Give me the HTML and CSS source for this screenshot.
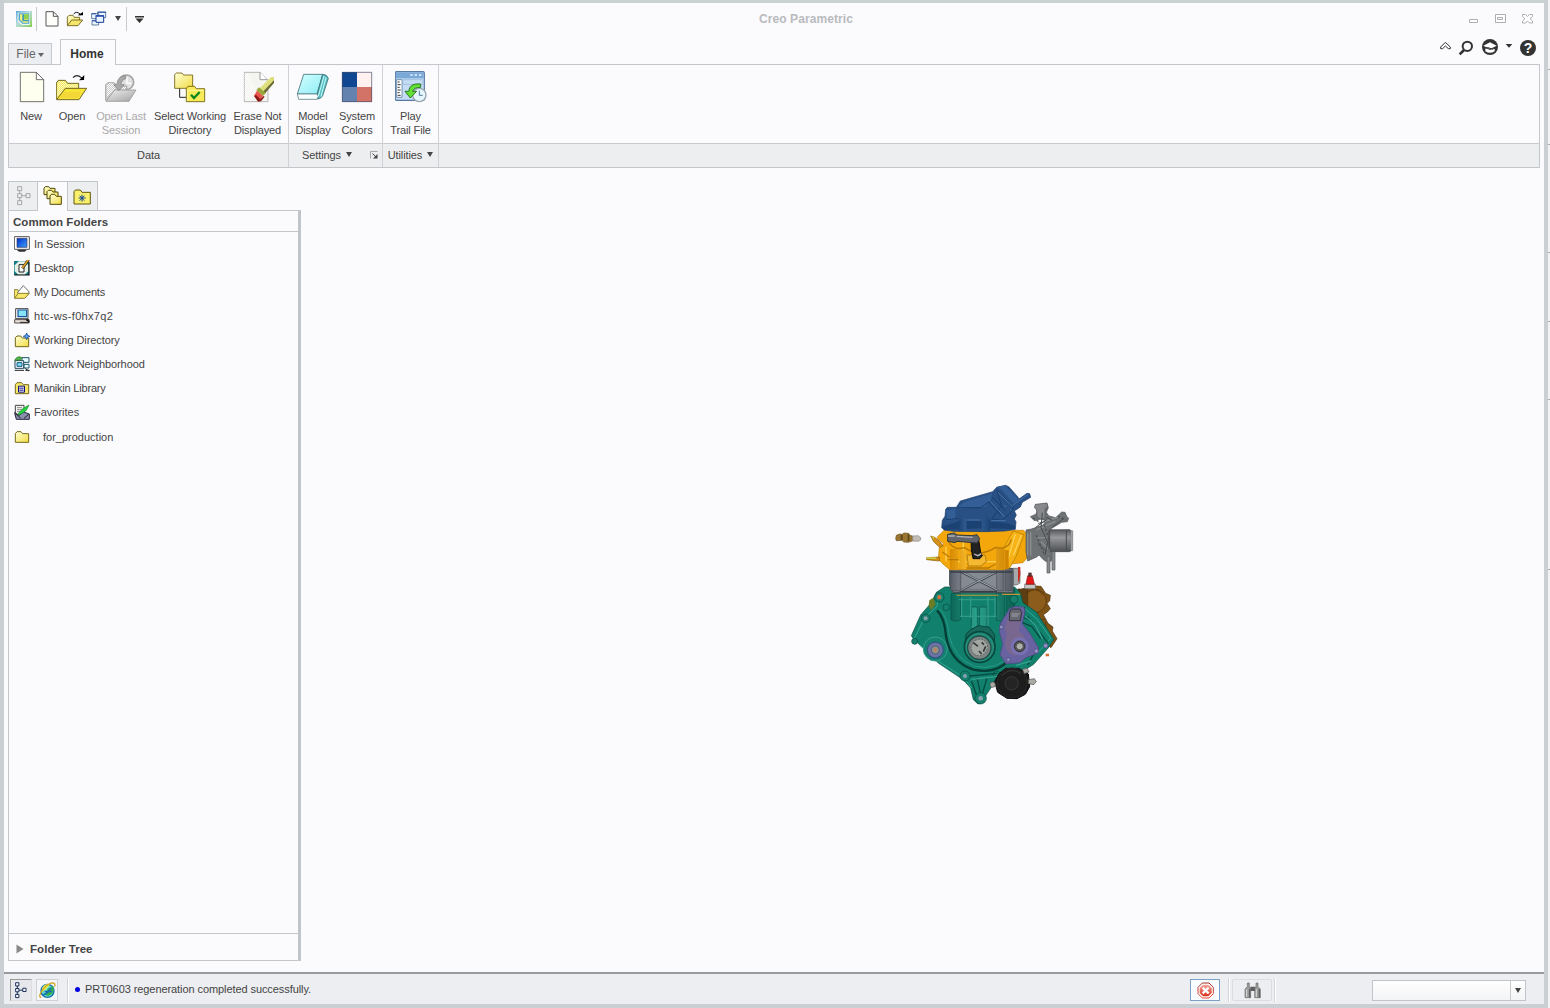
FILE: index.html
```html
<!DOCTYPE html>
<html lang="en">
<head>
<meta charset="utf-8">
<title>Creo Parametric</title>
<link rel="stylesheet" href="styles.css">
</head>
<body>
<svg class="defs" width="0" height="0" aria-hidden="true">
  <defs>
    <linearGradient id="gy" x1="0" y1="0" x2="1" y2="1"><stop offset="0" stop-color="#ffffd8"/><stop offset="1" stop-color="#f2dc42"/></linearGradient>
    <linearGradient id="gg" x1="0" y1="0" x2="1" y2="1"><stop offset="0" stop-color="#f0f0f0"/><stop offset="1" stop-color="#a2a2a2"/></linearGradient>
    <linearGradient id="gb" x1="0" y1="0" x2="1" y2="1"><stop offset="0" stop-color="#0030c8"/><stop offset="1" stop-color="#3c9cff"/></linearGradient>
    <linearGradient id="gc" x1="0" y1="0" x2="1" y2="1"><stop offset="0" stop-color="#d4ffff"/><stop offset="1" stop-color="#8cecf4"/></linearGradient>
    <linearGradient id="gl" x1="0" y1="0" x2="1" y2="1"><stop offset="0" stop-color="#5fa6dc"/><stop offset=".45" stop-color="#b7dcdb"/><stop offset="1" stop-color="#86cf4c"/></linearGradient>
    <linearGradient id="gr" x1="0" y1="0" x2="0" y2="1"><stop offset="0" stop-color="#9c3026"/><stop offset="1" stop-color="#ef4a32"/></linearGradient>
    <linearGradient id="gx" x1="0" y1="0" x2="0" y2="1"><stop offset="0" stop-color="#f2a79c"/><stop offset="1" stop-color="#d8301c"/></linearGradient>
    <linearGradient id="cyl" x1="0" y1="0" x2="0" y2="1"><stop offset="0" stop-color="#55575a"/><stop offset=".35" stop-color="#96989b"/><stop offset="1" stop-color="#4c4e50"/></linearGradient>
    <linearGradient id="post" x1="0" y1="0" x2="1" y2="0"><stop offset="0" stop-color="#5a6069"/><stop offset=".4" stop-color="#aab0b8"/><stop offset="1" stop-color="#565b64"/></linearGradient>
    <linearGradient id="gold" x1="0" y1="0" x2="1" y2="0"><stop offset="0" stop-color="#d88a00"/><stop offset=".4" stop-color="#ffc739"/><stop offset="1" stop-color="#cf8200"/></linearGradient>
    <linearGradient id="teal" x1="0" y1="0" x2="1" y2="0"><stop offset="0" stop-color="#0c6656"/><stop offset=".4" stop-color="#2aa18b"/><stop offset="1" stop-color="#0b5f50"/></linearGradient>
    <linearGradient id="navy" x1="0" y1="0" x2="1" y2="0"><stop offset="0" stop-color="#1c4375"/><stop offset=".4" stop-color="#4270a8"/><stop offset="1" stop-color="#1c4375"/></linearGradient>
    <pattern id="dots" width="6" height="6" patternUnits="userSpaceOnUse"><path fill="#fff" d="M0 0h3v3H0zM3 3h3v3H3z"/></pattern>
  </defs>
</svg>

<div class="desktop">
<div class="window">
  <header class="titlebar">
    <div class="quick">
      <svg class="logo" width="16" height="16" viewBox="48 33 48 48"><path fill="url(#gl)" d="M48 33h48v48H48z"/><path fill="#eef8f2" d="M53 38h37v37H65L53 63z"/><path fill="#4aa4cf" d="M56 40h32v31H67L56 60z"/><path fill="#f1ef7c" d="M60 43h25v25H69l-9-9z"/><path fill="#3e98ba" d="M67 43h5v17h14v4H67z"/><path fill="#8fd04c" d="M72 43h14v15H72z"/></svg>
      <i class="vsep"></i>
      <svg width="14" height="16" viewBox="133 33 42 48"><path fill="#fffffb" stroke="#555" stroke-width="3" d="M136 35h22l14 14v29h-36z"/><path fill="none" stroke="#555" stroke-width="3" d="M158 35v14h14"/></svg>
      <svg width="18" height="16" viewBox="198 33 54 48"><path fill="url(#gy)" stroke="#64580f" stroke-width="2.500" d="M202 75V51l5-5h12l4 6h16v8"/><path fill="#f6e56c" stroke="#64580f" stroke-width="2.500" d="M202 77l13-17h33l-14 17z"/><path fill="none" stroke="#111" stroke-width="3" d="M221 42q8-10 19 0v4"/><path d="M233 46h16V36z"/></svg>
      <svg width="16" height="16" viewBox="272 33 48 48"><g fill="#eaf6fd" stroke="#466992" stroke-width="2.500"><path d="M292 36h24v17h-24zM274 41h21v15h-21zM275 62h20v13h-20z"/><path stroke="#183a94" stroke-width="3" d="M287 47h23v20h-23z"/></g><path fill="#294ea8" d="M292 35h25v3h-25zM274 40h13v3h-13zM275 61h12v3h-12zM286 46h25v4h-25z"/></svg>
      <i class="caret c1"></i>
      <i class="vsep s2"></i>
      <svg class="qmenu" width="9" height="8" viewBox="0 0 9 8"><path fill="#333" d="M0 0h9v1.400H0zM.5 2.500h8l-4 4.500z"/></svg>
    </div>
    <h1>Creo Parametric</h1>
    <svg class="winctl" width="66" height="12" viewBox="1467 13 66 12"><g fill="#fff" stroke="#adadb2"><path d="M1469.500 19.500h8v3h-8zM1495.500 14.500h10v8h-10zM1497.500 17.500h5v2h-5z"/><path d="M1522.500 14.500h3l2 2 2-2h3v2l-2.500 2.200 2.500 2.300v2h-3l-2-2-2 2h-3v-2l2.500-2.300-2.500-2.200z"/></g></svg>
  </header>

  <nav class="tabs">
    <div class="tab file">File<i class="caret"></i></div>
    <div class="tab home">Home</div>
    <svg class="help" width="98" height="18" viewBox="1317 117 294 54"><g fill="none" stroke="#333"><path stroke-width="3" d="M1322 141l14-14 15 14v5h-6l-9-8-8 8h-6z"/><circle cx="1402" cy="139" r="14" stroke-width="6"/><path stroke-width="8" d="M1392 150l-13 13"/></g><circle cx="1470" cy="141" r="24" fill="#333"/><path fill="#fff" d="M1450 137l20-10 20 10-20 10zM1456 144l14 6 14-6v10q-14 9-28 0z"/><path fill="none" stroke="#333" stroke-width="3" d="M1455 145q8-5 15 0t15 0"/><path fill="#333" d="M1517 132h20l-10 11z"/><circle cx="1584" cy="144" r="24" fill="#333"/><text class="qmark" x="1584" y="159">?</text></svg>
  </nav>

  <section class="ribbon">
    <div class="group data">
      <div class="tools">
        <div class="tool"><svg viewBox="45 21 96 96"><path fill="#fffff0" stroke="#555" stroke-width="2.500" d="M61 25h48l22 22v66H61z"/><path fill="#fff" stroke="#555" stroke-width="2.500" d="M109 25v22h22z"/></svg><span>New</span></div>
        <div class="tool"><svg viewBox="168 21 96 96"><path fill="#f5ea62" stroke="#554d16" stroke-width="2.500" d="M169 106V57l6-8h21l7 9h33v16"/><path fill="url(#dots)" opacity=".6" d="M172 98V59l5-7h17l8 9h31v12h-38z"/><path fill="#f8e434" stroke="#554d16" stroke-width="2.500" d="M170 107l26-34h64l-23 34z"/><path fill="#f3d638" d="M178 103l14-19 51 1-8 18z"/><path fill="none" stroke="#222" stroke-width="3.500" d="M219 41q11-12 25 0l3 5"/><path d="M237 49l15-1 1-15z"/></svg><span>Open</span></div>
        <div class="tool off"><svg viewBox="315 21 96 96"><circle cx="379" cy="55" r="22" fill="#e0e0e0" stroke="#a5a5a5" stroke-width="5"/><path fill="none" stroke="#fff" stroke-width="4" d="M381 40v18h12"/><path fill="#c8c8c8" stroke="#9a9a9a" stroke-width="2.500" d="M317 110V62l6-6h20l7 10h30v12"/><path fill="url(#dots)" d="M320 101V64l5-6h15l8 10h30v8h-35z"/><path fill="url(#gg)" stroke="#999" stroke-width="2.500" d="M318 112l26-34h64l-21 34z"/><path fill="#a8a8a8" stroke="#808080" stroke-width="2" d="M377 35q-24 0-27 27h-9l15 18 17-18h-10q0-13 14-18z"/></svg><span>Open Last<br>Session</span></div>
        <div class="tool"><svg viewBox="522 21 96 96"><path fill="none" stroke="#222" stroke-width="3" d="M539 72v28h20"/><path fill="url(#gy)" stroke="#6c5e0a" stroke-width="2.500" d="M524 73V32l5-5h17l5 6h27v40z"/><path fill="#f9eb57" stroke="#665c06" stroke-width="2.500" d="M559 113V73l5-6h20l5 7h25v39z"/><path fill="none" stroke="#fff6a0" stroke-width="3" d="M563 110V79h48"/><path fill="none" stroke="#07871d" stroke-width="7" d="M573 92l9 10 17-18"/></svg><span>Select Working<br>Directory</span></div>
        <div class="tool"><svg viewBox="48 21 96 96"><path fill="#f4f4f1" stroke="#aaa" stroke-width="2.500" d="M55 25h47l24 23v65H55z"/><path fill="#fff" stroke="#888" stroke-width="2.500" d="M102 25v22h22"/><path fill="url(#dots)" d="M55 27h13l20 50-10 32H55z" opacity=".7"/><path fill="#dde07a" d="M99 75l36-36h9v9l-36 38z"/><path fill="#6c6c30" d="M108 86l36-38v9l-31 36z"/><path fill="#99a838" d="M99 70l20 17-8 9-20-17z"/><path fill="#e8534a" d="M84 96l9-16 18 16-11 12z"/><path fill="#8e1c1a" d="M84 96l6-3 13 12 9-9 4 2-11 14-9 1z"/></svg><span>Erase Not<br>Displayed</span></div>
      </div>
      <div class="foot">Data</div>
    </div>
    <div class="group settings">
      <div class="tools">
        <div class="tool"><svg viewBox="216 21 96 96"><path fill="url(#gc)" stroke="#48707b" stroke-width="2.500" d="M236 31h57l-17 59h-59z"/><path fill="#5cbfc4" stroke="#386d75" stroke-width="2.500" d="M293 31q13 0 17 12l-17 52q-4 9-16 10V90z"/><path fill="#f9ffff" stroke="#66838b" stroke-width="2.500" d="M217 90h59l4 7-4 9h-55z"/><path fill="none" stroke="#c4ffff" stroke-width="3" d="M297 36l-17 61M303 40l-15 58"/></svg><span>Model<br>Display</span></div>
        <div class="tool"><svg viewBox="348 21 96 96"><path fill="#104790" d="M351 24h45v45h-45z"/><path fill="#fff1f0" d="M396 24h45v45h-45z"/><path fill="#6482ae" d="M351 69h45v45h-45z"/><path fill="#d37267" d="M396 69h45v45h-45z"/><path fill="none" stroke="#444f69" stroke-width="2" d="M352 25h88v88h-88z"/></svg><span>System<br>Colors</span></div>
      </div>
      <div class="foot"><span>Settings</span><i class="caret"></i><svg width="8" height="8" viewBox="0 0 8 8"><path fill="none" stroke="#aaa" d="M.5 7.500v-7h7"/><path fill="none" stroke="#444" d="M2.500 2.500l4 4"/><path fill="#444" d="M7.500 3v4.500H3z"/></svg></div>
    </div>
    <div class="group utilities">
      <div class="tools">
        <div class="tool"><svg viewBox="508 21 96 96"><rect x="509" y="23" width="87" height="86" rx="4" fill="#c4dcf4" stroke="#5779a3" stroke-width="3.500"/><path fill="#7aa8d7" d="M511 25h83v18h-83z"/><path fill="#cce5fc" d="M554 30h7v6h-7zM567 30h7v6h-7zM580 30h7v6h-7z"/><path fill="#fff" stroke="#46688b" stroke-width="2" d="M513 47h16v53h-16z"/><path stroke="#333" stroke-width="3" d="M516 54h6M516 62h9M516 70h6M516 78h9M516 86h6M516 94h9"/><path fill="none" stroke="#a3c0de" stroke-width="3" d="M532 47h60v14h-60z"/><circle cx="581" cy="93" r="20" fill="#e7f5fc" stroke="#99a6ad" stroke-width="4"/><path fill="none" stroke="#527a98" stroke-width="3" d="M581 80v14h10"/><path fill="#62e034" stroke="#196414" stroke-width="2.500" d="M585 60q-33-4-36 22h-11l16 20 19-20h-12q3-12 24-12z"/></svg><span>Play<br>Trail File</span></div>
      </div>
      <div class="foot"><span>Utilities</span><i class="caret"></i></div>
    </div>
    <div class="group rest"><div class="tools"></div><div class="foot"></div></div>
  </section>

  <main class="work">
    <aside class="navigator">
      <div class="ntabs">
        <div class="ntab"><svg width="14" height="20" viewBox="50 29 42 60"><path fill="none" stroke="#999" stroke-width="2.500" d="M52 31h12v12H52zM52 52h12v12H52zM77 52h12v12H77zM52 73h12v12H52zM58 43v9M58 64v9M64 58h13"/></svg></div>
        <div class="ntab on"><svg width="20" height="20" viewBox="130 29 60 60"><g fill="url(#gy)" stroke="#514a0b" stroke-width="3"><path d="M133 55V35l4-4h10l4 5h15v19z"/><path d="M142 67V46l4-4h10l4 5h15v20z"/><path d="M151 84V59l4-5h10l5 6h15v24z"/></g></svg></div>
        <div class="ntab"><svg width="18" height="18" viewBox="220 34 54 54"><path fill="#faf06d" stroke="#5e570d" stroke-width="3" d="M223 82V45l4-5h15l5 7h25v35z"/><path stroke="#164894" stroke-width="3" d="M247 54v21M237 64h21M240 57l14 15M254 57l-14 15"/></svg></div>
      </div>
      <div class="panel">
        <h2>Common Folders</h2>
        <ul>
          <li class="t1"><svg viewBox="42 181 48 48"><path fill="#fff" stroke="#555" stroke-width="3" d="M43 183h45v38H43z"/><path fill="url(#gb)" stroke="#335" stroke-width="2" d="M51 188h30v27H51z"/><path fill="#333" d="M50 222h31l-7 6H57z"/></svg>In Session</li>
          <li class="t1"><svg viewBox="42 252 48 48"><path fill="#137c89" d="M42 255h45v42H42z"/><path fill="#e4efe6" d="M44 268l12-12h19l10 12v18l-11 10H55l-11-10z"/><path fill="#fff" stroke="#222" stroke-width="3" d="M57 266h15v22H57z"/><path fill="none" stroke="#111" stroke-width="3.500" d="M87 258v39H43"/><path stroke="#222" stroke-width="8" d="M86 251L67 277"/><path stroke="#e6a623" stroke-width="5" d="M86 250L67 276"/></svg>Desktop</li>
          <li class="t2"><svg viewBox="42 324 48 48"><path fill="#f7e86a" stroke="#776817" stroke-width="2.500" d="M43 366v-25h10l4 5h26v12"/><path fill="#fff" stroke="#555" stroke-width="2.500" d="M52 350l18-21 18 19-13 14z"/><path fill="#f5e86c" stroke="#776817" stroke-width="2.500" d="M43 367l12-15h33l-14 15z"/></svg>My Documents</li>
          <li class="t3"><svg viewBox="42 12 48 48"><path fill="#fff" stroke="#444" stroke-width="3" d="M47 14h37v30H47z"/><path fill="#86e2f6" stroke="#15539b" stroke-width="3.500" d="M54 18h26v20H54z"/><path fill="#ebe3db" stroke="#554b47" stroke-width="3" d="M44 47h34l9 4v6H44z"/><path stroke="#222" stroke-width="3" d="M60 55h24M77 47h10v9"/></svg>htc-ws-f0hx7q2</li>
          <li class="t1"><svg viewBox="42 84 48 48"><path fill="url(#gy)" stroke="#736618" stroke-width="3" d="M46 128V101l5-5h11l5 6h19v26z"/><path fill="#5ea0ff" stroke="#154991" stroke-width="2.500" d="M80 87l3 7 7 3-7 3-3 7-3-7-7-3 7-3z"/></svg>Working Directory</li>
          <li class="t1"><svg viewBox="42 156 48 48"><path fill="#e9ffff" stroke="#1a546c" stroke-width="3" d="M66 161h21v14H66zM72 181h15v11H72z"/><path fill="#fff" stroke="#214758" stroke-width="3" d="M45 170h26v23H45z"/><path fill="#7cdcf2" stroke="#175784" stroke-width="3" d="M51 176h15v11H51z"/><path fill="#50b844" stroke="#246a25" stroke-width="2" d="M44 169q8-16 22-8l-6 8z"/><path stroke="#222" stroke-width="3" d="M44 199h28M76 199h13M76 194l11 7"/></svg>Network Neighborhood</li>
          <li class="t2"><svg viewBox="42 228 48 48"><path fill="#f6e866" stroke="#77691d" stroke-width="3" d="M46 269V242l5-6h14l5 6h16v27z"/><path fill="#fff" stroke="#0b087d" stroke-width="3" d="M55.500 246.500h18v18h-18z"/><path stroke="#0b087d" stroke-width="3" d="M58 252.500h13M58 258.500h13"/></svg>Manikin Library</li>
          <li><svg viewBox="42 300 48 48"><path fill="#f5f5f4" stroke="#444" stroke-width="3" d="M46 304h26v32H46z"/><path stroke="#777" stroke-width="2.500" d="M51 311h15M51 317h15M51 323h10"/><path fill="#8a8dae" stroke="#26263e" stroke-width="3" d="M44 326l13 8 14-10 17 6v16H49z"/><path fill="#22d73f" stroke="#168525" stroke-width="2" d="M54 330l13-15 20-12-8 16-14 10-11 4z"/><path stroke="#222" stroke-width="3" d="M47 328l15 15M72 343l14-12"/></svg>Favorites</li>
          <li class="sub"><svg viewBox="42 375 48 48"><path fill="url(#gy)" stroke="#776a18" stroke-width="3" d="M46 415V389l5-6h12l5 6h18v26z"/></svg>for_production</li>
        </ul>
        <div class="tree"><svg width="8" height="10" viewBox="0 0 8 10"><path fill="#888" d="M.5 .5v9L7.500 5z"/></svg>Folder Tree</div>
      </div>
    </aside>

    <div class="canvas">
      <svg class="engine" width="200" height="235" viewBox="0 0 600 705">
        <!-- accessory housing and water pump -->
        <g stroke="#4b2f0a" stroke-width="2">
          <path fill="#7f5315" d="M408 344l26-12 34 2 14 21 14 6-2 17-8 7 10 16-9 10-12 8 14 26 15 11-2 12 14 23-18 27-50-40-34-60z"/>
          <circle cx="449" cy="378" r="35" fill="#8b5c1c"/><path fill="none" d="M428 353q24-22 47 7M432 412l20 25 28-4M482 440v40l18 22"/>
          <path fill="#5d3d12" d="M398 342h30v70h-25z"/>
        </g>
        <path fill="#a6a9ab" stroke="#54575a" stroke-width="2" d="M372 280h25l8 10v34l-10 6h-23z"/><path fill="#74797e" d="M378 288h8v36h-8z"/><path fill="#c92c20" d="M399 276h7v22l-4 22h-3z"/>
        <path fill="#c3c5c5" stroke="#6b6e6e" stroke-width="2" d="M419 327h32v14h-32z"/><path fill="#e31818" stroke="#861313" stroke-width="2" d="M428 302h14l6 26h-25z"/><path fill="#4e2f2c" d="M430 293h10v12h-10z"/>
        <!-- crankcase -->
        <path fill="#11806d" stroke="#064c40" stroke-width="2" d="M154 352l25-16h210l17 18 8 29 40 28 53 82-15 23-46 52-42 27-75 26-30 46-8 16-12 4-14-13-8-35-24-26-72-48-76-74-6-9 28-62 32-37z"/>
        <path fill="none" stroke="#30aa94" stroke-width="3" d="M88 490l30-60 38-36 4-35M104 510l64 54 68 44 24 31M413 395l42 36 42 58-40 47"/>
        <path fill="none" stroke="#043e36" stroke-width="7" d="M156 406q23 22 27 77 13 78 82 101 82 17 120-48"/>
        <path fill="none" stroke="#269986" stroke-width="3" d="M163 402q24 21 29 76 14 72 77 96 71 15 108-38"/>
        <g fill="url(#teal)" stroke="#075347" stroke-width="2"><path d="M198 355h28v80q-14 7-28 0zM334 355h25v80q-12 7-25 0zM365 342h24v69h-24zM259 396h18v67h-18zM284 396h22v64h-22z"/></g>
        <g fill="none" stroke="#2f9b87" stroke-width="4"><path d="M222 374h111M225 424h109M230 367v56M257 367v61M309 367v85M330 367v60M259 455l51 8"/></g>
        <path fill="#176a5b" stroke="#0a4940" stroke-width="3" d="M259 463l20-11 34 5 16 23-2 57-20 17-44-3-23-28 3-46z"/>
        <circle cx="284" cy="516" r="46" fill="#228b79" stroke="#08483e" stroke-width="5"/><circle cx="283" cy="518" r="35" fill="#7d8584" stroke="#204d45" stroke-width="4"/><path fill="#a3a7a4" stroke="#5d6361" stroke-width="3" stroke-dasharray="5 4" d="M258 520q3-25 25-27 22 0 25 24-6 24-25 25-21-1-25-22z"/><path fill="none" stroke="#343837" stroke-width="5" d="M265 503l14 11M295 530l7-16M282 528l8 9M290 502l7 7"/>
        <circle cx="151" cy="522" r="36" fill="#148270" stroke="#399e8e" stroke-width="3"/><circle cx="151" cy="525" r="24" fill="#6d73a6" stroke="#2f5a7f" stroke-width="4"/><circle cx="151" cy="525" r="12" fill="#8f958f" stroke="#555e6a" stroke-width="3"/><circle cx="151" cy="525" r="5" fill="#c57d55"/>
        <g fill="#15806d" stroke="#064a3f" stroke-width="2"><circle cx="122" cy="430" r="13"/><circle cx="163" cy="367" r="14"/><circle cx="184" cy="397" r="10"/><circle cx="387" cy="373" r="12"/><circle cx="240" cy="603" r="15"/><circle cx="287" cy="670" r="17"/><circle cx="89" cy="499" r="9"/><circle cx="335" cy="599" r="10"/></g>
        <g fill="#8a9fae"><circle cx="122" cy="430" r="6"/><circle cx="163" cy="367" r="6"/><circle cx="240" cy="603" r="6"/><circle cx="287" cy="670" r="7"/></g>
        <path fill="#6c7d25" d="M133 376l12-8 7 20-13 17-8-12z"/><path fill="#d46d32" d="M158 361h9v12h-9zM482 536h10v8h-10z"/>
        <g fill="none" stroke="#064b40" stroke-width="4"><path d="M254 603l82-8M276 608l10 45M306 608l-13 46M260 619l14 40M428 424l62 82M412 443l28 11 28 38M456 519l-28 51M419 396l-5 30 30 14"/></g>
        <g fill="none" stroke="#32a38e" stroke-width="4"><path d="M420 424q33 19 52 68M393 571l45-13M259 613l80-9"/></g>
        <!-- side cover -->
        <path fill="#6862a0" stroke="#4b4580" stroke-width="2" d="M374 400l18-6 25 2 3 13-8 37 22 28 27 45-3 16-35 13-17 15-43 4-18-28 8-31-10-39 4-25z"/>
        <path fill="#796790" d="M374 412h37l-10 57q26 18 22 43-8 29-34 29-27-4-29-36l6-31-8-12z"/><path fill="#676772" stroke="#34343e" stroke-width="3" d="M374 412l5-10h26l5 10-4 25h-33z"/><path stroke="#a2a2ab" stroke-width="3" d="M379 417h25M379 423h20"/>
        <circle cx="404" cy="514" r="27" fill="#7771b2"/><circle cx="404" cy="514" r="16" fill="#555" stroke="#302f37" stroke-width="3"/><circle cx="404" cy="514" r="8" fill="#a9afa9" stroke="#ddd" stroke-width="2" stroke-dasharray="4 3"/><g fill="#8c8fc0" stroke="#484477" stroke-width="2"><circle cx="454" cy="528" r="7"/><circle cx="370" cy="554" r="6"/><circle cx="349" cy="456" r="6"/><circle cx="482" cy="512" r="7"/></g>
        <!-- oil filter -->
        <path fill="#191919" stroke="#080808" stroke-width="3" d="M329 620l13-24 20-16h39l29 17 4 38-13 23-25 13-30-1-28-18z"/><circle cx="381" cy="624" r="45" fill="#1d1d1d" stroke="#282828" stroke-width="3"/><circle cx="380" cy="625" r="20" fill="#242424" stroke="#393939" stroke-width="3"/><path fill="none" stroke="#3c3c3c" stroke-width="3" d="M350 602q28-28 58-6"/>
        <g fill="#aaa9a5" stroke="#514f4c" stroke-width="2"><path d="M412 583l14-4 6 12-14 5zM430 614l18-3 6 9-8 9-16-3z"/><circle cx="323" cy="629" r="8"/></g>
        <!-- cylinder barrel -->
        <path fill="#747980" stroke="#424850" stroke-width="3" d="M194 281h190v72H205l-11-23z"/><path fill="#858b93" d="M230 289h106v52H230z"/><g fill="url(#post)" stroke="#484e58" stroke-width="2"><path d="M197 285h29v62h-29zM335 285h20v62h-20zM361 285h19v62h-19z"/></g><path fill="none" stroke="#41474f" stroke-width="7" d="M229 291l108 55M335 291l-106 55"/><path fill="none" stroke="#a1a8b0" stroke-width="3" d="M229 290l108 55M335 290l-106 55"/><path fill="none" stroke="#373d46" stroke-width="4" d="M195 291h187M224 350h112"/><path fill="#c29332" d="M214 359h126v3H214zM351 356h55v4h-55z"/>
        <!-- cylinder head -->
        <path fill="#f3a70a" stroke="#c58410" stroke-width="2" d="M177 166H416L425 176 427 248 414 263 369 268 359 284H194L174 267 160 252 163 215 177 207 159 192 156 187z"/>
        <path fill="#f7b215" stroke="#b17908" stroke-width="2" d="M384 168l33 11-24 66-19 34-20-1 3-61z"/><path fill="none" stroke="#ffd25a" stroke-width="4" d="M391 177l-25 85M409 180l-24 61M183 215v45M198 260h155M235 190v38"/>
        <g fill="url(#gold)"><path d="M195 222h24v63h-24zM224 226h20v57h-20zM333 218h23v67h-23zM358 225h13v58h-13z"/></g>
        <path fill="none" stroke="#b87a04" stroke-width="4" d="M190 199q16 29 49 19 44 31 93-1 37 10 47-24M172 231l22 16M190 254h30M332 267l-22 12h-65"/>
        <path fill="#d69114" stroke="#855a0b" stroke-width="2" d="M137 183l12 4 17 14 8 12-10 4-18-17zM125 248l38-2v12l-38-4z"/><path fill="#caca43" d="M125 247h28v5h-28zM139 183l9 3-2 8z"/>
        <path fill="#f4b831" stroke="#946310" stroke-width="2" d="M246 240h54l4 20-16 13h-38z"/><path fill="#222" stroke="#0a0a0a" stroke-width="3" d="M258 192l23 2 6 39 5 10-8 8h-20l-5-28z"/><path fill="#62656b" stroke="#32373e" stroke-width="3" d="M188 178l20-4 8 6 45 2 15-3 8 12-8 13-60-5-6 4-22-4z"/><path fill="none" stroke="#b0b3b8" stroke-width="4" d="M215 184l48 3M189 183h20"/><path fill="none" stroke="#b6babb" stroke-width="4" d="M267 237l12 5 10-6"/>
        <!-- valve cover -->
        <path fill="#285084" stroke="#1b3c6a" stroke-width="2" d="M182 103L187 97H214L226 78 323 50 335 37 362 31 372 36 398 65 402 72 426 55 434 56 437 67 412 82 406 96 388 108 394 120 388 132 393 140 391 163 360 168 300 170 205 169 178 165 170 158 172 136 180 124z"/>
        <path fill="#335f96" d="M217 98l21-18 84-25-6 22-15 19-74 5zM337 35l22-4 42 43-16 11-34-40zM184 106l27-5v31l-24 6z"/><path fill="#1c4273" d="M173 154l53-17h64l72 7 28 8v11l-83-4-130 6z"/>
        <g fill="url(#navy)"><path d="M222 132h22v37h-22zM290 132h26v37h-26zM228 124h11v16h-11zM299 124h11v16h-11z"/></g>
        <path fill="none" stroke="#1b3e6b" stroke-width="3" d="M336 46l50 49-7 16-28 25-31-4 29-40zM321 66l41 42M310 80l37 41M217 98h70l31-22M183 134l38-4"/><path fill="none" stroke="#4875aa" stroke-width="3" d="M338 51l46 44M311 74l48 52M358 90l6 6M376 103l4 4M245 135h42M319 137h43M384 90l44-31"/>
        <!-- throttle body -->
        <path fill="#6f7274" stroke="#4f5355" stroke-width="2" d="M423 165L439 162 475 150 482 137 468 132 448 137 436 125 452 118 456 110 451 90 486 85 490 98 484 112 492 123 512 128 530 111 540 112 545 124 551 130 547 140 530 142 500 160 494 168 553 165 561 172V222L555 228H512L504 236 499 258 488 262 476 255 462 240 455 246 428 258 423 230z"/>
        <path fill="url(#cyl)" stroke="#45494b" stroke-width="2" d="M494 164h60l6 5v57l-6 4h-60z"/><path fill="#b2b4b5" stroke="#777a7b" stroke-width="2" d="M558 167h5v60h-5z"/>
        <path fill="#87898c" stroke="#585b5c" stroke-width="2" d="M451 88l35-4 2 11-8 6v28l-13 3-11-6-1-22-7-6zM486 244h9v50h-9zM501 230h9v55h-9z"/><path fill="none" stroke="#8b8f91" stroke-width="4" d="M428 174v67M437 172v70M459 146l61-20M454 165l57-26M468 200l27 28M455 188h34"/><path fill="none" stroke="#484b4d" stroke-width="3" d="M472 113l-4 45 20 44-8 38M452 157l33-23M484 127l18 9M500 158l38-29M458 205l26 25M492 166v61M544 166v62"/><path fill="none" stroke="#4c5052" stroke-width="4" stroke-dasharray="7 6" d="M444 128l36 26 15 54M454 181l25 61M518 124l25 10"/>
        <!-- spark plug -->
        <path fill="#9a7430" stroke="#6e5529" stroke-width="2" d="M34 181l10-4 8 1 4-4 15 1 3 6 9 2 1 14-14 5-14-1-5-5-17 1-2-6z"/><path fill="#5b4921" d="M47 180h6v15h-6zM68 178h5v21h-5z"/><path fill="#c0bcb5" stroke="#8c8882" stroke-width="2" d="M83 183l17-1 7 6v7l-7 4-17-1z"/>
      </svg>
    </div>
  </main>

  <footer class="status">
    <div class="sbtn on"><svg width="12" height="17" viewBox="47 170 37 52"><path fill="#fff" stroke="#172a56" stroke-width="3" d="M49 172h10v10H49zM49 190h10v10H49zM71 189h10v10H71zM49 208h10v10H49zM54 182v8M54 200v8M59 195h12"/></svg></div>
    <div class="sbtn"><svg width="17" height="17" viewBox="115 168 52 52"><circle cx="141" cy="195" r="20" fill="#62dcd0" stroke="#176faa" stroke-width="4"/><path fill="#eff34b" d="M125 186q8-14 24-11l-14 17-12 6z"/><path fill="#36ae49" d="M143 187l16-6q3 14-5 24l-12 6-9-5z"/><path fill="none" stroke="#176eb4" stroke-width="5" d="M132 197h22M126 208q14-3 26-22"/><path fill="none" stroke="#d0a21e" stroke-width="4" d="M122 216q-9-2-1-16 14-24 34-29 11-1 8 11"/></svg></div>
    <i class="ssep"></i>
    <p><i class="dot"></i><span>PRT0603 regeneration completed successfully.</span></p>
    <div class="stop"><svg width="17" height="17" viewBox="79 154 51 51"><path fill="#fff" stroke="url(#gr)" stroke-width="3" d="M95 157h20l13 13v19l-13 13H95l-13-13v-19z"/><path fill="url(#gx)" d="M97 162h16l10 10v15l-10 10H97l-10-10v-15z"/><path stroke="#fff" stroke-width="7" d="M96 171l18 17M114 171l-18 17"/></svg></div>
    <i class="ssep"></i>
    <div class="find"><svg width="17" height="17" viewBox="220 156 51 51"><path fill="#9a9a9a" stroke="#6c6c6c" stroke-width="2" d="M230 159h6v11l4 2v31h-17v-26l7-7zM256 159h6v11l7 7v26h-17v-31l4-2z"/><path fill="#5f5f5f" d="M240 170h13v13h-13zM235 176h4v27h-4zM264 177h4v26h-4z"/><path stroke="#ddd" stroke-width="3" d="M228 178v23M257 178v23"/></svg></div>
    <i class="ssep"></i>
    <div class="select"><span></span><b><i class="caret"></i></b></div>
  </footer>
</div>
<div class="behind"><i></i><i></i><i></i><i></i><i></i><i></i></div>
</div>
</body>
</html>
```
FILE: styles.css
```css
* { box-sizing: border-box; }
body { margin: 0; font: 11px/14px "Liberation Sans", Arial, sans-serif; color: #444; background: #f8f9fa; overflow: hidden; }
h1, h2, ul, p { margin: 0; padding: 0; }
svg { display: block; flex: none; }
.defs { position: absolute; }
.desktop { display: flex; width: 1550px; height: 1008px; }
.window { display: flex; flex-direction: column; width: 1548px; border: 4px solid #cacfd3; border-top: 3px solid #c9d1d1; background: #fbfbfd; }
.behind { width: 2px; background: #f1f2f4; display: flex; flex-direction: column; }
.behind i { height: 1px; background: #aaa; margin-top: 69px; }
.behind i:nth-child(2) { margin-top: 74px; }
.behind i:nth-child(3) { margin-top: 107px; }
.behind i:nth-child(4) { margin-top: 68px; }
.behind i:nth-child(5) { margin-top: 77px; }
.behind i:nth-child(6) { margin-top: 169px; }

.caret { display: inline-block; width: 0; height: 0; border: 3.500px solid transparent; border-top: 5px solid #444; border-bottom: 0; }

.titlebar { display: flex; height: 32px; flex: none; align-items: center; padding-right: 11px; }
.quick { display: flex; align-items: center; width: 250px; padding-left: 12px; }
.logo { margin-right: 4px; }
.vsep { width: 1px; height: 24px; background: #c8cacf; margin-right: 8px; }
.quick > svg:nth-of-type(3) { margin-left: 7px; }
.quick > svg:nth-of-type(4) { margin-left: 7px; }
.c1 { margin: -1px 0 0 8px; border-width: 3px; border-top-width: 5px; }
.s2 { margin: 0 8px 0 5px; }
.qmenu { margin-top: 2px; }
h1 { font-size: 12px; line-height: 16px; color: #b9babd; white-space: nowrap; margin-left: 505px; letter-spacing: .08px; }
.winctl { margin-left: auto; }

.tabs { display: flex; height: 29px; align-items: flex-end; flex: none; padding: 0 7px 0 4px; }
.tab { font-size: 12px; border: 1px solid #c5c8cc; border-bottom: 0; display: flex; align-items: center; justify-content: center; }
.file { width: 44px; height: 21px; background: #eceef1; color: #666; }
.file .caret { margin: 2px 0 0 2px; border-width: 3.500px; border-top: 4px solid #666; border-bottom: 0; }
.home { width: 56px; height: 26px; margin: 0 0 -1px 8px; background: #fbfbfd; font-weight: bold; color: #333; position: relative; padding: 2px 2px 0 0; }
.help { margin: 0 0 7px auto; }
.qmark { font: bold 42px "Liberation Sans", Arial, sans-serif; fill: #fff; text-anchor: middle; }

.ribbon { display: flex; height: 104px; margin: 0 4px; border: 1px solid #c3c6ca; flex: none; }
.group { display: flex; flex-direction: column; border-right: 1px solid #cfd1d5; }
.data { width: 280px; }
.settings { width: 94px; }
.utilities { width: 56px; }
.rest { flex: 1; border: 0; }
.tools { display: flex; height: 78px; padding-top: 6px; }
.tool { display: flex; flex-direction: column; align-items: center; text-align: center; gap: 6px; white-space: nowrap; letter-spacing: -.12px; }
.tool svg { width: 32px; height: 32px; }
.data .tool:nth-child(1) { width: 44px; }
.data .tool:nth-child(2) { width: 38px; }
.data .tool:nth-child(3) { width: 60px; }
.data .tool:nth-child(4) { width: 78px; }
.data .tool:nth-child(5) { width: 57px; }
.settings .tools { padding-left: 2px; }
.settings .tool { width: 44px; }
.utilities .tool { width: 55px; }
.off { color: #aaa; }
.foot { flex: 1; background: #edeef0; border-top: 1px solid #c8cacd; display: flex; align-items: center; justify-content: center; padding-bottom: 2px; letter-spacing: -.1px; }
.foot .caret { margin: 0 0 0 5px; }
.settings .foot { justify-content: flex-start; padding-left: 13px; }
.settings .foot svg { margin-left: 18px; }

.work { display: flex; flex: 1; min-height: 0; padding: 13px 0 0 4px; }
.navigator { width: 293px; height: 780px; display: flex; flex-direction: column; }
.ntabs { display: flex; height: 30px; }
.ntab { width: 30px; height: 30px; border: 1px solid #c3c6ca; border-right: 0; border-bottom: 0; background: #eceef0; display: flex; align-items: center; justify-content: center; padding: 0 0 1px 1px; }
.ntab:first-child { width: 29px; }
.ntab:last-child { border-right: 1px solid #c3c6ca; width: 31px; padding: 1px 1px 0 0; }
.ntab.on { background: #fbfbfd; position: relative; }
.panel { flex: 1; min-height: 0; display: flex; flex-direction: column; border: 1px solid #c3c6ca; border-right: 3px solid #c0c3c7; }
.ntabs + .panel { margin-top: -1px; }
h2 { font-size: 11.500px; line-height: 20px; height: 21px; border-bottom: 1px solid #c3c6ca; padding: 1px 0 0 4px; letter-spacing: .05px; color: #444; }
ul { list-style: none; flex: 1; }
li { display: flex; align-items: center; height: 24px; padding-left: 5px; gap: 4px; }
li svg { width: 16px; height: 16px; }
li.sub { gap: 13px; margin-top: 1px; }
.t1 { letter-spacing: -.09px; }
.t2 { letter-spacing: -.2px; }
.t3 { letter-spacing: .33px; }
.tree { height: 27px; border-top: 1px solid #c3c6ca; display: flex; align-items: center; gap: 6px; padding: 3px 0 0 7px; font-size: 11.500px; font-weight: bold; letter-spacing: .05px; }
.canvas { flex: 1; padding: 294px 0 0 584px; }

.status { display: flex; align-items: center; height: 32px; flex: none; background: #eceef1; border-top: 2px solid #989a9e; padding: 2px 18px 0 6px; }
.sbtn { width: 22px; height: 22px; border: 1px solid #cfd1d4; background: #f5f6f8; display: flex; align-items: center; justify-content: center; margin-right: 4px; }
.sbtn.on { border-color: #999 #ddd #ddd #999; background: #e7e8eb; }
.ssep { width: 2px; height: 24px; border-left: 1px solid #d3d5d8; background: #fff; margin-left: 5px; }
.status p { display: flex; align-items: center; gap: 5px; margin: -2px 0 0 6px; width: 1115px; letter-spacing: -.08px; }
.dot { width: 5px; height: 5px; border-radius: 50%; background: #0000e0; }
.stop { width: 30px; height: 22px; border: 1px solid #7ba2c4; background: #fafdff; display: flex; align-items: center; justify-content: center; margin-right: 3px; }
.find { width: 40px; height: 22px; margin-left: 2px; border: 1px solid #dcdde0; border-radius: 2px; display: flex; align-items: center; justify-content: center; }
.find + .ssep { margin-left: 2px; }
.select { display: flex; width: 154px; height: 21px; margin-left: auto; border: 1px solid #c1c4c8; background: linear-gradient(#fff, #f3f4f6); }
.select span { flex: 1; border-right: 1px solid #c8cacd; }
.select b { width: 14px; display: flex; align-items: center; justify-content: center; }
```
